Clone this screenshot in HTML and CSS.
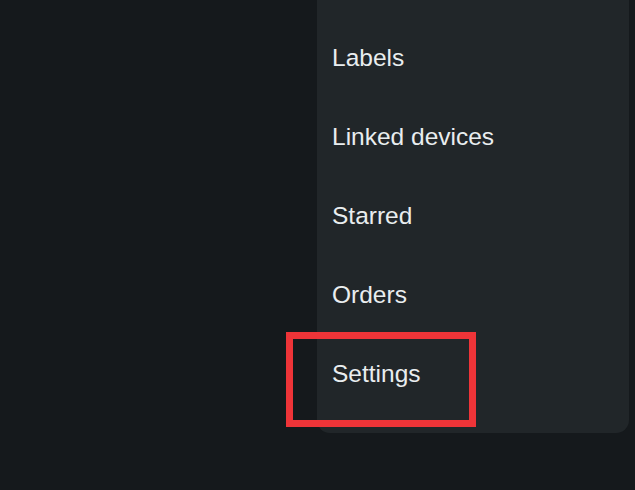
FILE: index.html
```html
<!DOCTYPE html>
<html lang="en">
<head>
  <meta charset="UTF-8" />
  <meta name="viewport" content="width=device-width, initial-scale=1.0"/>
  <title>Menu</title>
  <link rel="stylesheet" href="styles.css">
</head>
<body>
  <div class="screen">
    <ul class="menu">
      <li class="menu-item">Labels</li>
      <li class="menu-item">Linked devices</li>
      <li class="menu-item">Starred</li>
      <li class="menu-item">Orders</li>
      <li class="menu-item highlighted">
        Settings
        <span class="mark"></span>
      </li>
    </ul>
  </div>
</body>
</html>
```

FILE: styles.css
```css
body {
  margin: 0;
  background-color: #15191c;
  font-family: "Liberation Sans", Arial, sans-serif;
}

.screen {
  width: 635px;
  height: 490px;
  display: flex;
  align-items: flex-start;
  overflow: hidden;
}

.menu {
  list-style: none;
  margin: 0 0 0 317px;
  padding: 18px 0 20px;
  width: 312px;
  background-color: #212629;
  border-radius: 0 0 13px 13px;
}

.menu-item {
  position: relative;
  height: 79px;
  line-height: 79px;
  padding-left: 15px;
  font-size: 24.5px;
  color: #e9edef;
}

.mark {
  position: absolute;
  left: -31px;
  top: -2px;
  width: 176px;
  height: 81px;
  border: 7px solid #ee3438;
}
```
